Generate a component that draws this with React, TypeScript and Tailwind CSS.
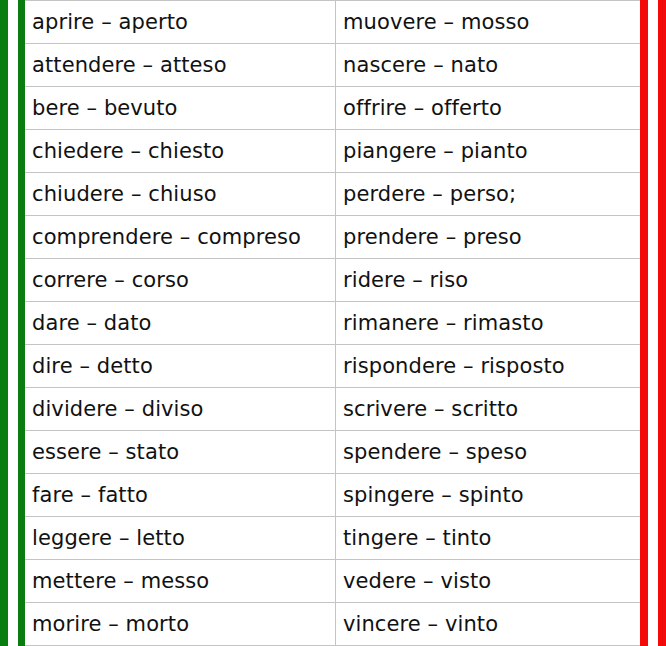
const rows: [string, string][] = [
  ['aprire – aperto', 'muovere – mosso'],
  ['attendere – atteso', 'nascere – nato'],
  ['bere – bevuto', 'offrire – offerto'],
  ['chiedere – chiesto', 'piangere – pianto'],
  ['chiudere – chiuso', 'perdere – perso;'],
  ['comprendere – compreso', 'prendere – preso'],
  ['correre – corso', 'ridere – riso'],
  ['dare – dato', 'rimanere – rimasto'],
  ['dire – detto', 'rispondere – risposto'],
  ['dividere – diviso', 'scrivere – scritto'],
  ['essere – stato', 'spendere – speso'],
  ['fare – fatto', 'spingere – spinto'],
  ['leggere – letto', 'tingere – tinto'],
  ['mettere – messo', 'vedere – visto'],
  ['morire – morto', 'vincere – vinto'],
]

export default function App() {
  return (
    <div className="flex w-[666px] h-[646px] bg-white overflow-hidden font-['DejaVu_Sans',sans-serif] text-[#111]">
      <div className="w-[8px] bg-[#0a7d10]" />
      <div className="w-[10px]" />
      <div className="w-[7px] bg-[#0a7d10]" />
      <div className="flex-1 border-t border-[#c4c4c4]">
        {rows.map(([a, b], i) => (
          <div key={i} className="grid grid-cols-[311px_1fr] h-[43px] border-b border-[#c4c4c4]">
            <div className="pl-[7px] pt-[1px] flex items-center text-[21px] tracking-[0.1px] border-r border-[#c4c4c4]">{a}</div>
            <div className="pl-[7px] pt-[1px] flex items-center text-[21px] tracking-[0.1px]">{b}</div>
          </div>
        ))}
      </div>
      <div className="w-[8px] bg-[#f50a0a]" />
      <div className="w-[10px]" />
      <div className="w-[8px] bg-[#f50a0a]" />
    </div>
  )
}
